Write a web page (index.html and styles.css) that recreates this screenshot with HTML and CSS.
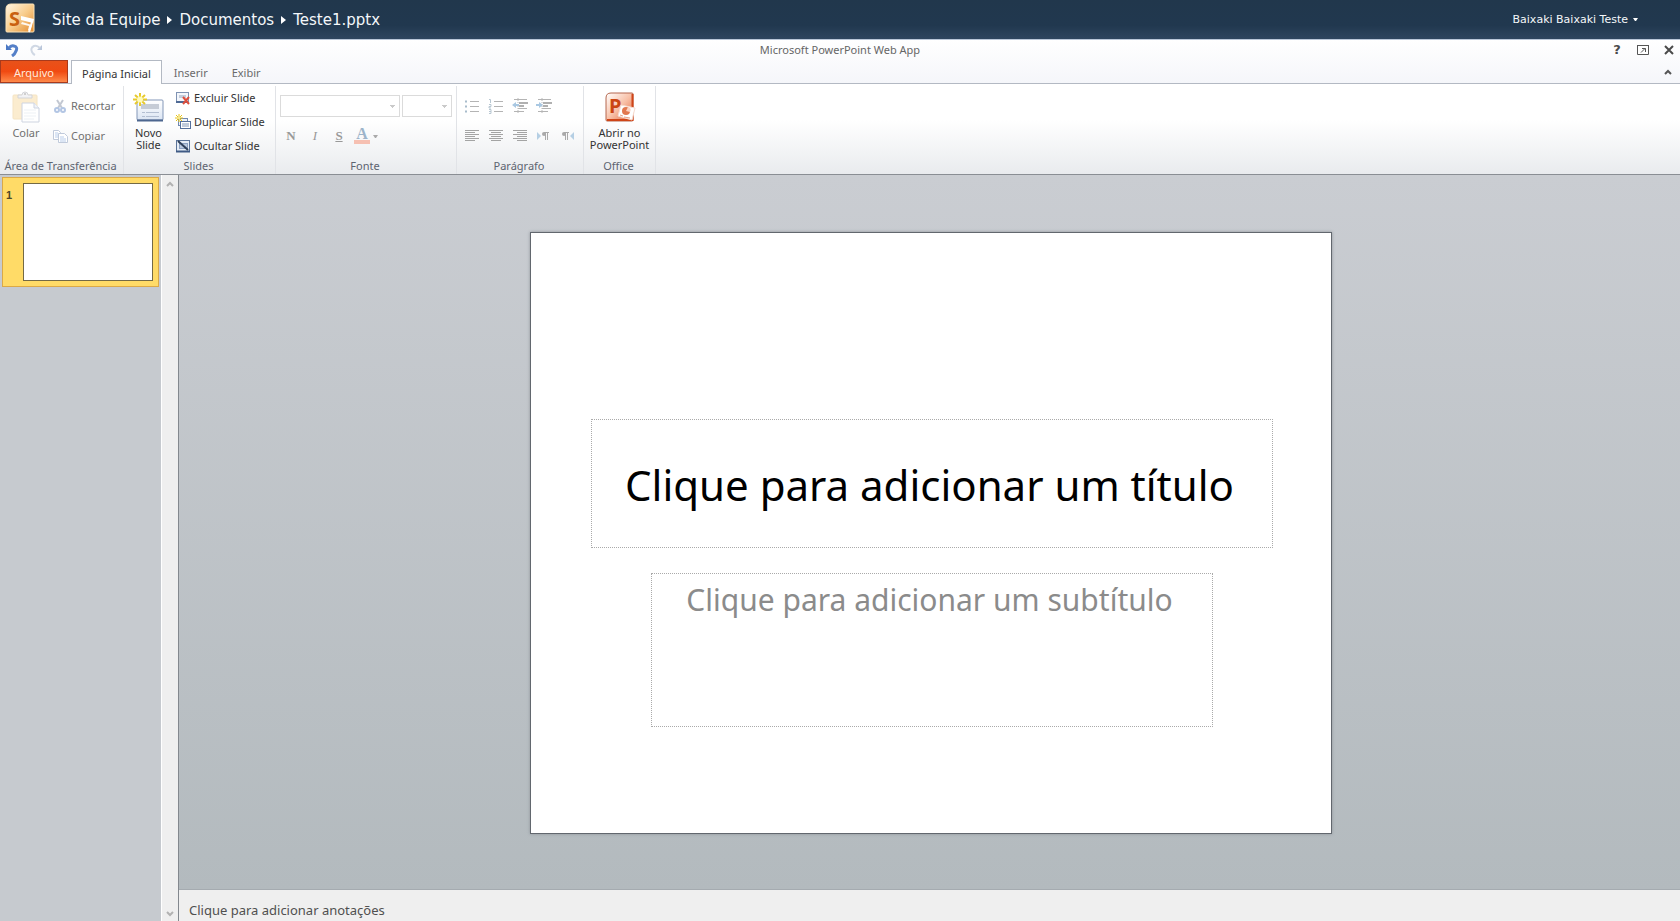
FILE: index.html
```html
<!DOCTYPE html>
<html lang="pt-BR">
<head>
<meta charset="utf-8">
<title>Teste1.pptx - Microsoft PowerPoint Web App</title>
<link rel="stylesheet" href="styles.css">
</head>
<body>
<header class="site-bar">
  <svg class="site-logo" viewBox="0 0 32 32" aria-hidden="true">
    <defs>
      <linearGradient id="sg" x1="0" y1="0" x2="1" y2="1"><stop offset="0" stop-color="#fff6e4"/><stop offset=".5" stop-color="#f8cd8d"/><stop offset="1" stop-color="#e38a2c"/></linearGradient>
    </defs>
    <path d="M7 2h22q1 0 1 1v26q0 1-1 1H3q-1 0-1-1V7q0-5 5-5z" fill="url(#sg)" stroke="#fbe3b8"/>
    <path d="M17 14l13 3-1 4-12-3z" fill="#fff"/>
    <path d="M18 20l10 3-2 6-2-1 1-4-8-2z" fill="#fff" opacity=".9"/>
    <path d="M28 20l-3 10" stroke="#fff" stroke-width="2"/>
    <text class="logo-letter" x="5" y="24" fill="#c9600f">S</text>
  </svg>
  <nav class="crumbs">
    <a href="#">Site da Equipe</a>
    <svg class="crumb-arrow" viewBox="0 0 5 8" aria-hidden="true"><path d="M0 0l5 4-5 4z"/></svg>
    <a href="#">Documentos</a>
    <svg class="crumb-arrow" viewBox="0 0 5 8" aria-hidden="true"><path d="M0 0l5 4-5 4z"/></svg>
    <a href="#">Teste1.pptx</a>
  </nav>
  <button class="user">Baixaki Baixaki Teste <svg viewBox="0 0 5 3" aria-hidden="true"><path d="M0 0h5L3 3H2z"/></svg></button>
</header>

<div class="ribbon-top">
  <div class="quick">
    <div class="quick-left">
      <button aria-label="Desfazer"><svg viewBox="0 0 14 14"><path d="M1 1v6h6z" fill="#4a78c4"/><path d="M4 5q2-3 5-2 4 1 2 5-1 3-4 5" fill="none" stroke="#5580c8" stroke-width="3"/></svg></button>
      <button aria-label="Refazer" disabled><svg viewBox="0 0 14 14"><path d="M13 2v5H8z" fill="#b9c6da"/><path d="M11 5Q8 2 5 3 1 5 3 9q1 2 3 3" fill="none" stroke="#d0d8e4" stroke-width="2"/></svg></button>
    </div>
    <span class="app-name">Microsoft PowerPoint Web App</span>
    <div class="quick-right">
      <button class="help" aria-label="Ajuda">?</button>
      <button aria-label="Abrir em nova janela"><svg viewBox="0 0 12 12"><path d="M.5 1.500h11v9H.5z" fill="#fff" stroke="#555"/><path d="M0 1.500h12" stroke="#555"/><path d="M4 8.500l4-4M5 4.500h3.500V8" fill="none" stroke="#555"/></svg></button>
      <button aria-label="Fechar"><svg viewBox="0 0 12 12"><path d="M2 2l8 8M10 2l-8 8" stroke="#4a4a4a" stroke-width="2"/></svg></button>
    </div>
  </div>
  <div class="tabs" role="tablist">
    <button class="tab file" role="tab">Arquivo</button>
    <button class="tab active" role="tab" aria-selected="true">Página Inicial</button>
    <button class="tab" role="tab">Inserir</button>
    <button class="tab" role="tab">Exibir</button>
    <button class="collapse" aria-label="Minimizar faixa"><svg viewBox="0 0 8 6"><path d="M1 5l3-3 3 3" fill="none" stroke="#555" stroke-width="2"/></svg></button>
  </div>
</div>

<section class="ribbon">
  <div class="group clip">
    <div class="body">
      <button class="big" disabled>
        <svg viewBox="0 0 32 32"><g opacity=".5"><rect x="3" y="4" width="24" height="24" rx="1" fill="#f9dba0" stroke="#eccb88"/><path d="M8 7V4h4q0-3 3-3t3 3h4v3z" fill="#e6e7ea" stroke="#a9abb2"/><circle cx="15" cy="3" r="1" fill="#888"/><path d="M12 12h12l5 5v14H12z" fill="#fff" stroke="#9fabc4"/><path d="M24 12v5h5" fill="#e4eaf4" stroke="#9fabc4"/><path d="M14 19h12M14 22h12M14 25h12M14 28h10" stroke="#dfe5ee"/></g></svg>
        <span>Colar</span>
      </button>
      <div class="rows two">
        <button class="small" disabled><svg viewBox="0 0 16 16"><g fill="none"><path d="M5 2l5 8M11 2L6 10" stroke-width="2" stroke="#c3c8d2"/><circle cx="5" cy="12" r="2" stroke-width="2" stroke="#b3c6e4"/><circle cx="11" cy="12" r="2" stroke-width="2" stroke="#b3c6e4"/></g></svg><span>Recortar</span></button>
        <button class="small" disabled><svg viewBox="0 0 16 16"><g fill="#fff" stroke="#c0cadb"><path d="M1.500 2.500h5l2 2v7h-7z"/><path d="M6.500 5.500h6l3 3v6h-9z"/><path d="M3 5h3M3 7h3M3 9h3M8 9h4M8 11h6M8 13h6" stroke="#b9cdea"/></g></svg><span>Copiar</span></button>
      </div>
    </div>
    <h2>Área de Transferência</h2>
  </div>
  <div class="group slides">
    <div class="body">
      <button class="big">
        <svg viewBox="0 0 32 32"><defs><linearGradient id="ns" x1="0" y1="0" x2="0" y2="1"><stop offset="0" stop-color="#fff"/><stop offset="1" stop-color="#dbe5f3"/></linearGradient></defs><rect x="4" y="9" width="26" height="20" rx="1" fill="url(#ns)" stroke="#8397b8"/><path d="M4 29.500h26" stroke="#4d668f" stroke-width="2"/><path d="M8 13h18v5H8z" fill="#c6ccd6"/><path d="M9 21.500h3M13 21.500h13M9 25.500h3M13 25.500h13" stroke="#b3bfd2"/><path d="M7 2v13M0 8.500h14M2 4l10 9M12 4L2 13" stroke="#e8ca2c" stroke-width="2"/><circle cx="7" cy="8.500" r="3" fill="#fffbb8"/></svg>
        <span>Novo<br>Slide</span>
      </button>
      <div class="rows">
        <button class="small"><svg viewBox="0 0 16 16"><rect x="1.500" y="2.500" width="12" height="9" fill="#f3f6fb" stroke="#7f93b3"/><path d="M1 12h12" stroke="#4f6a95" stroke-width="2"/><path d="M4 5h7v3H4z" fill="#c3cddc"/><path d="M8 7l6 7M14 7l-6 7" stroke="#de4e3c" stroke-width="2"/></svg><span>Excluir Slide</span></button>
        <button class="small"><svg viewBox="0 0 16 16"><rect x="3.500" y="4.500" width="9" height="7" fill="#eef3fa" stroke="#7189b0"/><rect x="5.500" y="7.500" width="10" height="7" fill="#fff" stroke="#55709c"/><path d="M7 10h7M7 12h7" stroke="#8096b8"/><path d="M4 0v8M0 4h8M1 1l6 6M7 1L1 7" stroke="#e8c417"/><circle cx="4" cy="4" r="1" fill="#fff9b0"/></svg><span>Duplicar Slide</span></button>
        <button class="small"><svg viewBox="0 0 16 16"><rect x="1.500" y="2.500" width="13" height="11" fill="#e6edf6" stroke="#5b7499"/><path d="M1 13.500h14" stroke="#3f5a85" stroke-width="2"/><rect x="4.500" y="5.500" width="8" height="5" fill="#b8c7dd" stroke="#8ba0c0"/><path d="M3 3l10 9" stroke="#2f405a" stroke-width="2"/></svg><span>Ocultar Slide</span></button>
      </div>
    </div>
    <h2>Slides</h2>
  </div>
  <div class="group font">
    <div class="body stack">
      <div class="line">
        <select class="font-name" aria-label="Fonte" disabled><option></option></select>
        <select class="font-size" aria-label="Tamanho" disabled><option></option></select>
      </div>
      <div class="line tools">
        <button class="serif b" disabled>N</button>
        <button class="serif i" disabled>I</button>
        <button class="serif s" disabled>S</button>
        <button class="serif a" aria-label="Cor da fonte" disabled><span>A</span><svg viewBox="0 0 5 3"><path d="M0 0h5L3 3H2z"/></svg></button>
      </div>
    </div>
    <h2>Fonte</h2>
  </div>
  <div class="group para">
    <div class="body stack">
      <div class="line tools">
        <button aria-label="Marcadores" disabled><svg viewBox="0 0 16 16"><path d="M6 3.500h9M6 8.500h9M6 13.500h9" stroke="#b4b4b4"/><path d="M1 3.500h2M1 8.500h2M1 13.500h2" stroke="#a8bccb" stroke-width="2"/></svg></button>
        <button aria-label="Numeração" disabled><svg viewBox="0 0 16 16"><path d="M6 3.500h9M6 8.500h9M6 13.500h9" stroke="#b4b4b4"/><path d="M1 1.500h1.500V5M1 6.500h2v2H1v1.500h2M1 11.500h2v4H1M1 13.500h2" fill="none" stroke="#b8c7d2"/></svg></button>
        <button aria-label="Diminuir recuo" disabled><svg viewBox="0 0 16 16"><path d="M2 1.500h13M6 10.500h9M2 13.500h10" stroke="#b4b4b4"/><path d="M7 5h9M7 8h5" stroke="#b0b0b0" stroke-width="2"/><path d="M6 0v16" stroke="#bbb" stroke-dasharray="1 1"/><path d="M0 7l4-3v2h3v2H4v2z" fill="#a9c8e2"/></svg></button>
        <button aria-label="Aumentar recuo" disabled><svg viewBox="0 0 16 16"><path d="M2 1.500h13M6 10.500h9M2 13.500h10" stroke="#b4b4b4"/><path d="M7 5h9M7 8h5" stroke="#b0b0b0" stroke-width="2"/><path d="M6 0v16" stroke="#bbb" stroke-dasharray="1 1"/><path d="M7 7L3 4v2H0v2h3v2z" fill="#a9c8e2"/></svg></button>
      </div>
      <div class="line tools">
        <button aria-label="Alinhar à esquerda" disabled><svg viewBox="0 0 16 16"><path d="M1 2.500h14M1 4.500h10M1 6.500h14M1 8.500h10M1 10.500h14M1 12.500h10" stroke="#a4a4a4"/></svg></button>
        <button aria-label="Centralizar" disabled><svg viewBox="0 0 16 16"><path d="M1 2.500h14M3 4.500h10M1 6.500h14M3 8.500h10M1 10.500h14M3 12.500h10" stroke="#a4a4a4"/></svg></button>
        <button aria-label="Alinhar à direita" disabled><svg viewBox="0 0 16 16"><path d="M1 2.500h14M5 4.500h10M1 6.500h14M5 8.500h10M1 10.500h14M5 12.500h10" stroke="#a4a4a4"/></svg></button>
        <button aria-label="Esquerda para direita" disabled><svg viewBox="0 0 16 16"><path d="M1 4l4 4-4 4z" fill="#b5cfe4"/><path d="M9.500 4v8M11.500 4v8M8 4.500h5" stroke="#aaa"/><circle cx="8" cy="6" r="2" fill="#aaa"/></svg></button>
        <button aria-label="Direita para esquerda" disabled><svg viewBox="0 0 16 16"><path d="M14 4l-4 4 4 4z" fill="#b5cfe4"/><path d="M5.500 4v8M7.500 4v8M4 4.500h5" stroke="#aaa"/><circle cx="4" cy="6" r="2" fill="#aaa"/></svg></button>
      </div>
    </div>
    <h2>Parágrafo</h2>
  </div>
  <div class="group office">
    <div class="body">
      <button class="big">
        <svg viewBox="0 0 32 32" aria-hidden="true"><defs><linearGradient id="pg" x1="0" y1="0" x2="1" y2="1"><stop offset="0" stop-color="#fff"/><stop offset=".5" stop-color="#f8c1a8"/><stop offset="1" stop-color="#e0633a"/></linearGradient></defs><path d="M7 2h21q1 0 1 1v26q0 1-1 1H3q-1 0-1-1V7q0-5 5-5z" fill="url(#pg)" stroke="#b5674e"/><path d="M28.500 3v26H3" fill="none" stroke="#cf4518" stroke-width="2"/><text class="logo-letter" x="5" y="22" fill="#cb4512">P</text><path d="M17 14l14 3-3 12-14-4z" fill="#fff" stroke="#f6dcd0"/><circle cx="22" cy="20" r="4" fill="#e2784f"/><path d="M22 20l2-4q4 1 2 5z" fill="#fbd3c2"/><path d="M16 24l3 1M20 26l6 1" stroke="#e9a28a"/></svg>
        <span>Abrir no<br>PowerPoint</span>
      </button>
    </div>
    <h2>Office</h2>
  </div>
</section>

<main class="work">
  <aside class="thumbs">
    <button class="thumb" aria-label="Slide 1"><span class="num">1</span><span class="preview"></span></button>
  </aside>
  <div class="scroll">
    <button aria-label="Rolar para cima"><svg viewBox="0 0 8 6"><path d="M1 5l3-3 3 3" fill="none" stroke="#b2b2b2" stroke-width="2"/></svg></button>
    <button aria-label="Rolar para baixo"><svg viewBox="0 0 8 6"><path d="M1 1l3 3 3-3" fill="none" stroke="#b2b2b2" stroke-width="2"/></svg></button>
  </div>
  <div class="editor">
    <div class="canvas">
      <article class="slide">
        <h1 class="ph title" contenteditable="true" spellcheck="false">Clique para adicionar um título</h1>
        <p class="ph sub" contenteditable="true" spellcheck="false">Clique para adicionar um subtítulo</p>
      </article>
    </div>
    <textarea class="notes" rows="1" aria-label="Anotações" placeholder="Clique para adicionar anotações"></textarea>
  </div>
</main>
</body>
</html>
```
FILE: styles.css
```css
* { box-sizing: border-box; }
body {
  margin: 0;
  min-height: 100vh;
  display: flex;
  flex-direction: column;
  font: 11px/16px "Noto Sans", "Open Sans", sans-serif;
  color: #333;
  background: #fff;
}
button { font: inherit; color: inherit; background: none; border: 0; padding: 0; margin: 0; }
svg { display: block; flex: none; }
a { color: inherit; text-decoration: none; }
.logo-letter { font: bold 20px "Noto Sans", sans-serif; }

.site-bar {
  display: flex;
  align-items: center;
  height: 39px;
  padding: 0 42px 0 4px;
  background: linear-gradient(#21374c 0%, #21384f 65%, #2e455f 100%);
  color: #f4f7fa;
  font-family: "DejaVu Sans", sans-serif;
}
.site-logo { width: 32px; height: 32px; margin-bottom: 4px; }
.crumbs { display: flex; align-items: center; gap: 7px; margin-left: 16px; font-size: 15px; }
.crumb-arrow { width: 5px; height: 8px; fill: #fff; }
.user { display: flex; align-items: center; gap: 5px; margin-left: auto; font-size: 11px; }
.user svg { width: 5px; height: 3px; fill: #fff; }

.ribbon-top {
  background: linear-gradient(#fff, #f5f6fa);
  border-top: 1px solid #b9c6d8;
  border-bottom: 1px solid #b3b9c3;
}
.quick {
  display: grid;
  grid-template-columns: 1fr auto 1fr;
  align-items: center;
  height: 20px;
  padding: 0 5px;
}
.quick-left { display: flex; gap: 10px; }
.quick-left svg { width: 14px; height: 14px; }
.quick-right { display: flex; align-items: center; gap: 14px; justify-content: flex-end; }
.quick-right svg { width: 12px; height: 12px; }
.help { width: 12px; font: bold 13px/16px "DejaVu Sans", sans-serif; color: #4a4a4a; }
.app-name { color: #666; }
.tabs { display: flex; height: 23px; }
.tab { padding: 2px 12px 0; color: #6a6a6a; }
.tab.file {
  width: 68px;
  margin-right: 3px;
  color: #ffe9dc;
  border: 1px solid #a83a1c;
  background: linear-gradient(#e8521a, #f04a12 50%, #ff8a4a);
}
.tab.active {
  padding: 2px 10px 0;
  margin-bottom: -1px;
  color: #333;
  background: #fff;
  border: 1px solid #b3b9c3;
  border-bottom: 0;
}
.collapse { margin: 0 8px 0 auto; }
.collapse svg { width: 8px; height: 6px; }

.ribbon {
  display: flex;
  height: 91px;
  background: linear-gradient(#fff 0%, #fff 40%, #e9ebee 100%);
  border-bottom: 1px solid #8a8e94;
}
.group {
  display: flex;
  flex-direction: column;
  justify-content: space-between;
  margin-top: 2px;
  border-right: 1px solid #e1e3e7;
}
.group h2 { margin: 0; padding-right: 2px; font-size: 11px; font-weight: 400; text-align: center; color: #5d6470; }
.clip { width: 124px; }
.slides { width: 152px; }
.font { width: 181px; }
.para { width: 127px; }
.office { width: 72px; }
.body { display: flex; }
.big { display: flex; flex-direction: column; align-items: center; padding-top: 5px; line-height: 12px; }
.big svg { width: 32px; height: 32px; margin-bottom: 4px; }
.big:disabled, .small:disabled { color: #707070; }
.clip .big { width: 52px; }
.slides .big { width: 49px; }
.office .big { width: 71px; }
.rows { display: flex; flex-direction: column; padding-left: 2px; }
.rows.two { padding: 5px 0 0; }
.small { display: flex; align-items: center; gap: 3px; height: 24px; }
.rows.two .small { height: 30px; }
.small svg { width: 16px; height: 16px; }
.stack { flex-direction: column; padding-top: 5px; }
.line { display: flex; align-items: center; height: 30px; }
.font .line { padding-left: 4px; gap: 2px; }
.line select {
  appearance: none;
  height: 22px;
  border: 1px solid #ccc;
  background-color: #fff;
  background-image: linear-gradient(#b5b5b5, #b5b5b5), linear-gradient(#b5b5b5, #b5b5b5), linear-gradient(#b5b5b5, #b5b5b5);
  background-repeat: no-repeat;
  background-size: 5px 1px, 3px 1px, 1px 1px;
  background-position: right 4px top 9px, right 5px top 10px, right 6px top 11px;
}
.font-name { width: 120px; }
.font-size { width: 50px; }
.font .tools { gap: 0; padding-left: 3px; }
.serif { width: 24px; font: bold 13px/16px "Liberation Serif", serif; color: #999; }
.serif.i { font-style: italic; font-weight: 400; }
.serif.s { text-decoration: underline; }
.serif.a { display: flex; width: 32px; align-items: center; gap: 3px; padding-left: 3px; font-size: 16px; line-height: 12px; color: #9db4ca; }
.serif.a span { width: 16px; border-bottom: 4px solid #f6c0b2; }
.serif.a svg { width: 5px; height: 3px; fill: #aaa; }
.para .tools { padding-left: 7px; gap: 8px; }
.para .tools svg { width: 16px; height: 16px; }

.work { flex: 1; display: flex; }
.thumbs { width: 161px; padding: 2px; background: #c6cacf; }
.thumb {
  display: flex;
  width: 100%;
  padding: 5px;
  padding-left: 3px;
  background: #ffdb67;
  border: 1px solid #dba946;
}
.num { width: 17px; padding-top: 4px; text-align: left; font-weight: 700; font-family: "Liberation Sans", sans-serif; color: #4d4628; }
.preview { flex: 1; aspect-ratio: 4 / 3; background: #fff; border: 1px solid #746a45; }
.scroll {
  width: 18px;
  display: flex;
  flex-direction: column;
  justify-content: space-between;
  align-items: center;
  padding: 6px 0 4px;
  background: #efefef;
  border-left: 1px solid #fff;
  border-right: 1px solid #83888e;
}
.scroll svg { width: 8px; height: 6px; }
.editor { flex: 1; display: flex; flex-direction: column; }
.canvas {
  flex: 1;
  display: flex;
  align-items: center;
  justify-content: center;
  padding: 2px 0 0 2px;
  background: linear-gradient(#cacdd2, #b3babe);
}
.slide {
  display: flex;
  flex-direction: column;
  align-items: center;
  width: 802px;
  aspect-ratio: 4 / 3;
  padding: 186px 0 0 2px;
  background: #fff;
  border: 1px solid #62676e;
  box-shadow: 0 0 3px #8e939a;
}
.ph { margin: 0; border: 1px dotted #aaa; font-family: "Noto Sans", sans-serif; font-weight: 400; text-align: center; }
.title { width: 682px; height: 129px; padding-right: 4px; font-size: 42px; line-height: 130px; color: #000; }
.sub { width: 562px; height: 154px; margin-top: 25px; padding: 6px 4px 0 0; font-size: 30px; line-height: 40px; color: #8b8b8b; }
.notes {
  display: block;
  height: 32px;
  padding: 9px 10px 0;
  border: 0;
  border-top: 1px solid #a5abb0;
  resize: none;
  overflow: hidden;
  background: #efefef;
  font: 13px/22px "Noto Sans", sans-serif;
}
.notes::placeholder { color: #505050; opacity: 1; }
```
